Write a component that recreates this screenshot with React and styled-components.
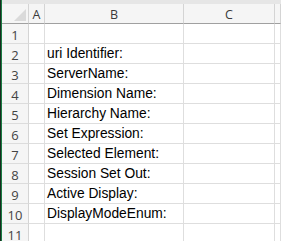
import React from "react";
import styled, { createGlobalStyle } from "styled-components";

const GlobalStyle = createGlobalStyle`
  html, body {
    margin: 0;
    padding: 0;
    background: #ffffff;
    overflow: hidden;
  }
`;

const Window = styled.div`
  display: flex;
  width: 281px;
  height: 241px;
  overflow: hidden;
  background: #ffffff;
`;

const Edge = styled.div`
  width: 1px;
  flex: none;
  background: #1b2a20;
  border-right: 1px solid #1a7c43;
`;

const Sheet = styled.div`
  flex: 1;
  display: flex;
  flex-direction: column;
  font-family: "Open Sans", "Liberation Sans", Arial, sans-serif;
`;

const TopStrip = styled.div`
  height: 4px;
  flex: none;
  background: #e6e6e6;
`;

const Grid = styled.div`
  display: grid;
  grid-template-columns: 27px 16px 139px 91px 1fr;
  grid-auto-rows: 20px;
`;

const Corner = styled.div`
  position: relative;
  background: #f5f5f5;
  border-right: 1px solid #d4d4d4;
  border-bottom: 1px solid #a0a0a0;
`;

const Triangle = styled.div`
  position: absolute;
  right: 2px;
  bottom: 2px;
  width: 0;
  height: 0;
  border-left: 12px solid transparent;
  border-bottom: 12px solid #dadada;
`;

const ColHead = styled.div`
  display: flex;
  align-items: center;
  justify-content: center;
  background: #f5f5f5;
  border-right: 1px solid #d4d4d4;
  border-bottom: 1px solid #a0a0a0;
  color: #3a3a3a;
  font-size: 12.5px;
  padding-top: 1px;
`;

const RowHead = styled.div`
  display: flex;
  align-items: center;
  justify-content: center;
  background: #f5f5f5;
  border-right: 1px solid #d4d4d4;
  border-bottom: 1px solid #dcdcdc;
  color: #444444;
  font-size: 13px;
  padding-top: 2px;
`;

const Cell = styled.div`
  display: flex;
  align-items: flex-end;
  padding: 0 0 1px 2px;
  border-right: 1px solid #dedede;
  border-bottom: 1px solid #dedede;
  color: #000000;
  font-family: "Liberation Sans", Arial, sans-serif;
  font-size: 13.8px;
  white-space: nowrap;
  overflow: visible;
  line-height: 17px;
`;

const labels = [
  "",
  "uri Identifier:",
  "ServerName:",
  "Dimension Name:",
  "Hierarchy Name:",
  "Set Expression:",
  "Selected Element:",
  "Session Set Out:",
  "Active Display:",
  "DisplayModeEnum:",
  "",
];

export default function App() {
  return (
    <>
      <GlobalStyle />
      <Window>
        <Edge />
        <Sheet>
          <TopStrip />
          <Grid>
            <Corner>
              <Triangle />
            </Corner>
            <ColHead>A</ColHead>
            <ColHead>B</ColHead>
            <ColHead>C</ColHead>
            <ColHead />
            {labels.map((text, i) => (
              <React.Fragment key={i}>
                <RowHead>{i + 1}</RowHead>
                <Cell />
                <Cell>{text}</Cell>
                <Cell />
                <Cell />
              </React.Fragment>
            ))}
          </Grid>
        </Sheet>
      </Window>
    </>
  );
}
